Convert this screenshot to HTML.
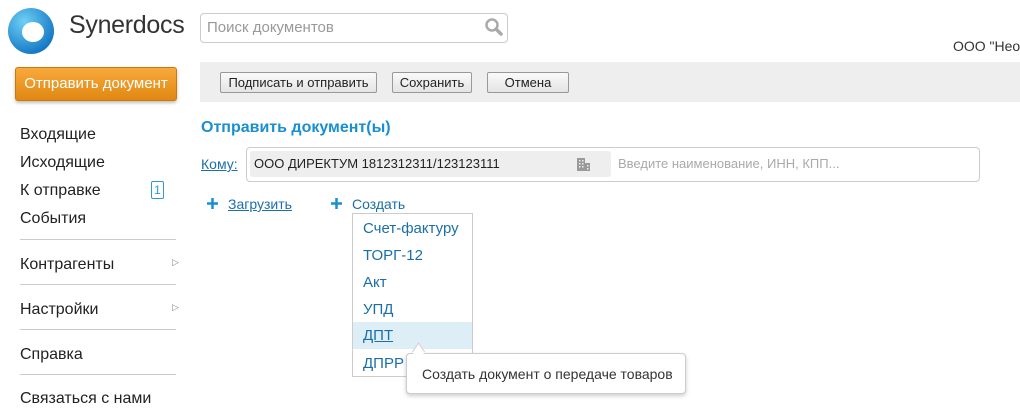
<!DOCTYPE html>
<html><head><meta charset="utf-8"><style>
*{margin:0;padding:0;box-sizing:border-box}
body{width:1020px;height:416px;overflow:hidden;background:#fff;font-family:"Segoe UI","Liberation Sans","DejaVu Sans",sans-serif;color:#222;position:relative}
.a{position:absolute;white-space:nowrap}
.btn{position:absolute;height:21px;border:1px solid #999;background:linear-gradient(#fafafa,#e4e4e4);font-size:13px;text-align:center;line-height:19px;border-radius:2px}
.nav{position:absolute;left:20px;font-size:16px;color:#222}
.hr{position:absolute;left:20px;width:156px;height:1px;background:#ccc}
.it{position:absolute;left:363px;font-size:15px;color:#1b6fa8}
</style></head><body>
<svg class="a" style="left:7px;top:7px" width="48" height="48" viewBox="0 0 48 48">
<defs><radialGradient id="g" cx="0.35" cy="0.3" r="0.8"><stop offset="0" stop-color="#6fd0f5"/><stop offset="1" stop-color="#0a6fc0"/></radialGradient></defs>
<circle cx="24" cy="24" r="23" fill="url(#g)"/><ellipse cx="26" cy="25" rx="11" ry="10" fill="#fff"/></svg>
<div class="a" style="left:69px;top:11px;font-size:25px;color:#333;letter-spacing:-0.3px">Synerdocs</div>
<div class="a" style="left:200px;top:13px;width:308px;height:30px;border:1px solid #ccc;border-radius:4px"></div>
<div class="a" style="left:207px;top:19px;font-size:15px;color:#999">Поиск документов</div>
<svg class="a" style="left:484px;top:17px" width="20" height="20" viewBox="0 0 20 20"><circle cx="8" cy="8" r="5.5" fill="none" stroke="#aaa" stroke-width="2.5"/><path d="M12 12l5 5" stroke="#aaa" stroke-width="3.5" stroke-linecap="round"/></svg>
<div class="a" style="left:953px;top:38px;font-size:14px;color:#333">ООО "Нео</div>
<div class="a" style="left:15px;top:67px;width:162px;height:34px;border-radius:3px;background:linear-gradient(#f9a93c,#e08812);border:1px solid #c87a10;box-shadow:0 2px 3px rgba(0,0,0,.25);color:#fff;font-size:15px;text-align:center;line-height:31px">Отправить документ</div>
<div class="a" style="left:200px;top:62px;width:820px;height:40px;background:#eee"></div>
<div class="btn" style="left:220px;top:72px;width:157px">Подписать и отправить</div>
<div class="btn" style="left:392px;top:72px;width:80px">Сохранить</div>
<div class="btn" style="left:487px;top:72px;width:82px">Отмена</div>
<div class="nav" style="top:126px">Входящие</div>
<div class="nav" style="top:154px">Исходящие</div>
<div class="nav" style="top:182px">К отправке</div>
<div class="a" style="left:151px;top:181px;width:13px;height:18px;border:1px solid #2a9ad8;border-radius:2px;font-size:12px;color:#2a9ad8;text-align:center;line-height:16px">1</div>
<div class="nav" style="top:210px">События</div>
<div class="hr" style="top:239px"></div>
<div class="nav" style="top:256px">Контрагенты</div><div class="a" style="left:172px;top:257px;font-size:9px;color:#888">▷</div>
<div class="hr" style="top:284px"></div>
<div class="nav" style="top:301px">Настройки</div><div class="a" style="left:172px;top:302px;font-size:9px;color:#888">▷</div>
<div class="hr" style="top:329px"></div>
<div class="nav" style="top:346px">Справка</div>
<div class="hr" style="top:374px"></div>
<div class="nav" style="top:390px">Связаться с нами</div>
<div class="a" style="left:201px;top:119px;font-size:16px;font-weight:bold;color:#1a8fd0">Отправить документ(ы)</div>
<div class="a" style="left:201px;top:156px;font-size:14px;color:#1b6fa8;text-decoration:underline">Кому:</div>
<div class="a" style="left:246px;top:147px;width:734px;height:35px;border:1px solid #ccc;border-radius:4px"></div>
<div class="a" style="left:250px;top:151px;width:361px;height:26px;background:#eee;border-radius:3px"></div>
<div class="a" style="left:254px;top:156px;font-size:13px;color:#222">ООО ДИРЕКТУМ 1812312311/123123111</div>
<svg class="a" style="left:577px;top:158px" width="13" height="13" viewBox="0 0 13 13" fill="#999"><rect x="0" y="0" width="8" height="13"/><rect x="8" y="5" width="5" height="8"/><g fill="#eee"><rect x="2" y="2" width="1.5" height="1.5"/><rect x="5" y="2" width="1.5" height="1.5"/><rect x="2" y="5" width="1.5" height="1.5"/><rect x="5" y="5" width="1.5" height="1.5"/><rect x="2" y="8" width="1.5" height="1.5"/><rect x="5" y="8" width="1.5" height="1.5"/><rect x="10" y="7" width="1.5" height="1.5"/><rect x="10" y="10" width="1.5" height="1.5"/></g></svg>
<div class="a" style="left:618px;top:156px;font-size:13px;color:#aaa">Введите наименование, ИНН, КПП...</div>
<svg class="a" style="left:207px;top:198px" width="11" height="11"><path d="M5.5 0v11M0 5.5h11" stroke="#1a8fd0" stroke-width="2.5"/></svg>
<div class="a" style="left:228px;top:196px;font-size:14px;color:#1b6fa8;text-decoration:underline">Загрузить</div>
<svg class="a" style="left:331px;top:198px" width="11" height="11"><path d="M5.5 0v11M0 5.5h11" stroke="#1a8fd0" stroke-width="2.5"/></svg>
<div class="a" style="left:352px;top:196px;font-size:14px;color:#1b6fa8;border-bottom:1px dashed #1b6fa8;line-height:17px">Создать</div>
<div class="a" style="left:352px;top:213px;width:121px;height:164px;border:1px solid #ccc;background:#fff"></div>
<div class="a" style="left:353px;top:322px;width:119px;height:27px;background:#ddeef6"></div>
<div class="it" style="top:220px">Счет-фактуру</div>
<div class="it" style="top:247px">ТОРГ-12</div>
<div class="it" style="top:274px">Акт</div>
<div class="it" style="top:301px">УПД</div>
<div class="it" style="top:327px;text-decoration:underline">ДПТ</div>
<div class="it" style="top:355px">ДПРР</div>
<div class="a" style="left:406px;top:353px;width:280px;height:41px;background:#fff;border:1px solid #ccc;border-radius:4px;box-shadow:0 2px 4px rgba(0,0,0,.2)"></div>
<div class="a" style="left:413px;top:346px;width:11px;height:11px;background:#fff;border-left:1px solid #ccc;border-top:1px solid #ccc;transform:rotate(45deg) skew(10deg,10deg)"></div>
<div class="a" style="left:422px;top:366px;font-size:14px;color:#333">Создать документ о передаче товаров</div>
</body></html>
